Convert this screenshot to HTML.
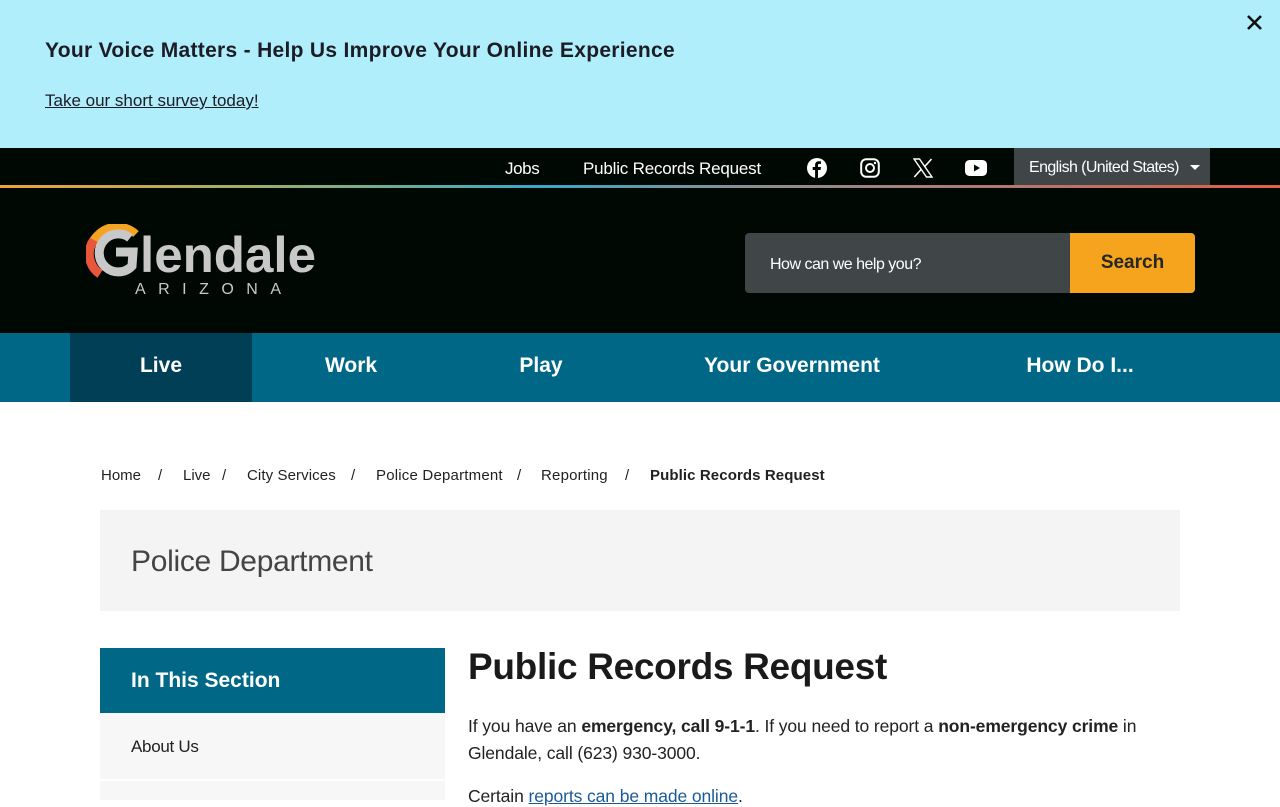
<!DOCTYPE html>
<html><head><meta charset="utf-8"><style>
*{margin:0;padding:0;box-sizing:border-box}
body{width:1280px;height:800px;overflow:hidden;font-family:"Liberation Sans",sans-serif;background:#fff;color:#1a1a1a;position:relative}
.a{position:absolute;white-space:nowrap}
</style></head><body>
<div class="a" style="left:0;top:0;width:1280px;height:148px;background:#b0eefc"></div>
<div class="a" style="left:45px;top:39px;font-size:21px;font-weight:bold;color:#1c1c24;letter-spacing:0.3px">Your Voice Matters - Help Us Improve Your Online Experience</div>
<div class="a" style="left:45px;top:91px;font-size:17px;color:#1c1c24;text-decoration:underline;letter-spacing:0px">Take our short survey today!</div>
<svg class="a" style="left:1246px;top:14px" width="17" height="17" viewBox="0 0 17 17"><path d="M2 2L15 15M15 2L2 15" stroke="#111" stroke-width="2.6"/></svg>

<div class="a" style="left:0;top:148px;width:1280px;height:185px;background:#000803"></div>
<div class="a" style="left:0;top:185px;width:1280px;height:3px;background:linear-gradient(90deg,#f0a23a 0%,#9fae6a 20%,#3aa8c8 42%,#8a8f94 58%,#e0604a 100%)"></div>
<div class="a" style="left:505px;top:159px;font-size:17px;color:#fff;letter-spacing:-0.4px">Jobs</div>
<div class="a" style="left:583px;top:159px;font-size:17px;color:#fff;letter-spacing:-0.2px">Public Records Request</div>
<svg class="a" style="left:807px;top:158px" width="20" height="20" viewBox="0 0 20 20"><circle cx="10" cy="10" r="10" fill="#fff"/><path d="M11 20V12h2.6l.4-3H11V7.3c0-.9.3-1.4 1.5-1.4H14V3.3c-.3 0-1.2-.1-2.2-.1-2.2 0-3.7 1.300-3.7 3.8V9H5.700v3H8.100v8z" fill="#000803"/></svg>
<svg class="a" style="left:860px;top:158px" width="20" height="20" viewBox="0 0 20 20"><rect x="1.2" y="1.2" width="17.6" height="17.6" rx="5" fill="none" stroke="#fff" stroke-width="2"/><circle cx="10" cy="10" r="4" fill="none" stroke="#fff" stroke-width="2"/><circle cx="15" cy="5" r="1.2" fill="#fff"/></svg>
<svg class="a" style="left:913px;top:158px" width="20" height="20" viewBox="0 0 20 20"><path d="M1 1h5.500l12.500 18h-5.500z" fill="none" stroke="#fff" stroke-width="1.4"/><path d="M18.500 1L11.300 9M1.300 19l7.200-8" stroke="#fff" stroke-width="1.6"/></svg>
<svg class="a" style="left:965px;top:160px" width="22" height="16" viewBox="0 0 22 16"><rect x="0" y="0" width="22" height="16" rx="4.500" fill="#fff"/><path d="M9 4.500v7l6-3.500z" fill="#000803"/></svg>
<div class="a" style="left:1014px;top:148px;width:196px;height:37px;background:#404547"></div>
<div class="a" style="left:1029px;top:159px;font-size:16px;color:#fff;letter-spacing:-0.6px">English (United States)</div>
<svg class="a" style="left:1190px;top:165px" width="10" height="6"><path d="M0 0h10L5 5z" fill="#fff"/></svg>

<svg class="a" style="left:86px;top:224px" width="236" height="76" viewBox="0 0 236 76">
<path d="M28 6 A24 24 0 0 0 14 50" fill="none" stroke="#e8573a" stroke-width="9"/>
<path d="M8 16 A26 24 0 0 1 50 10" fill="none" stroke="#f4a422" stroke-width="8"/>
<path d="M44 14 A19 19 0 1 0 46 42 L47 28 H30" fill="none" stroke="#c8c8c8" stroke-width="9"/>
<text x="54" y="48" font-family="Liberation Sans" font-weight="bold" font-size="50" fill="#c8c8c8" textLength="176" lengthAdjust="spacingAndGlyphs">lendale</text>
<text x="49" y="70" font-family="Liberation Sans" font-size="16" fill="#c8c8c8" textLength="146">ARIZONA</text>
</svg>

<div class="a" style="left:745px;top:233px;width:326px;height:60px;background:#404547;border-radius:4px 0 0 4px"></div>
<div class="a" style="left:770px;top:256px;font-size:16px;color:#fff;letter-spacing:-0.5px">How can we help you?</div>
<div class="a" style="left:1070px;top:233px;width:125px;height:60px;background:#f6a41e;border-radius:0 4px 4px 0;font-size:19px;font-weight:bold;color:#262626;text-align:center;line-height:60px">Search</div>

<div class="a" style="left:0;top:333px;width:1280px;height:69px;background:#006886"></div>
<div class="a" style="left:70px;top:333px;width:182px;height:69px;background:#003f55"></div>
<div class="a" style="left:70px;top:333px;width:182px;line-height:66px;text-align:center;font-size:21px;font-weight:bold;color:#fff">Live</div>
<div class="a" style="left:252px;top:333px;width:198px;line-height:66px;text-align:center;font-size:21px;font-weight:bold;color:#fff">Work</div>
<div class="a" style="left:450px;top:333px;width:182px;line-height:66px;text-align:center;font-size:21px;font-weight:bold;color:#fff">Play</div>
<div class="a" style="left:682px;top:333px;width:220px;line-height:66px;text-align:center;font-size:21px;font-weight:bold;color:#fff;letter-spacing:0px">Your Government</div>
<div class="a" style="left:1000px;top:333px;width:160px;line-height:66px;text-align:center;font-size:21px;font-weight:bold;color:#fff;letter-spacing:0px">How Do I...</div>

<div class="a" style="left:101px;top:467px;font-size:15px;color:#222">Home</div>
<div class="a" style="left:158px;top:467px;font-size:15px;color:#222">/</div>
<div class="a" style="left:183px;top:467px;font-size:15px;color:#222">Live</div>
<div class="a" style="left:222px;top:467px;font-size:15px;color:#222">/</div>
<div class="a" style="left:247px;top:467px;font-size:15px;color:#222;letter-spacing:0.1px">City Services</div>
<div class="a" style="left:351px;top:467px;font-size:15px;color:#222">/</div>
<div class="a" style="left:376px;top:467px;font-size:15px;color:#222;letter-spacing:0.2px">Police Department</div>
<div class="a" style="left:517px;top:467px;font-size:15px;color:#222">/</div>
<div class="a" style="left:541px;top:467px;font-size:15px;color:#222;letter-spacing:0.2px">Reporting</div>
<div class="a" style="left:625px;top:467px;font-size:15px;color:#222">/</div>
<div class="a" style="left:650px;top:467px;font-size:15px;font-weight:bold;color:#222;letter-spacing:0.1px">Public Records Request</div>

<div class="a" style="left:100px;top:510px;width:1080px;height:101px;background:#f4f4f4"></div>
<div class="a" style="left:131px;top:545px;font-size:30px;color:#444;letter-spacing:-0.3px">Police Department</div>

<div class="a" style="left:100px;top:648px;width:345px;height:65px;background:#006886"></div>
<div class="a" style="left:131px;top:669px;font-size:21px;font-weight:bold;color:#fff;letter-spacing:0px">In This Section</div>
<div class="a" style="left:100px;top:713px;width:345px;height:66px;background:#f7f7f7"></div>
<div class="a" style="left:131px;top:737px;font-size:17px;color:#222;letter-spacing:-0.3px">About Us</div>
<div class="a" style="left:100px;top:781px;width:345px;height:19px;background:#f7f7f7"></div>

<div class="a" style="left:468px;top:646px;font-size:37px;font-weight:bold;color:#1a1a1a;letter-spacing:-0.3px">Public Records Request</div>
<div class="a" style="left:468px;top:713px;font-size:17.5px;line-height:27px;color:#222;letter-spacing:-0.1px">If you have an <b>emergency, call 9-1-1</b>. If you need to report a <b>non-emergency crime</b> in<br>Glendale, call (623) 930-3000.</div>
<div class="a" style="left:468px;top:786px;font-size:17.5px;color:#222;letter-spacing:-0.1px">Certain <span style="color:#1a5a9a;text-decoration:underline">reports can be made online</span>.</div>
</body></html>
